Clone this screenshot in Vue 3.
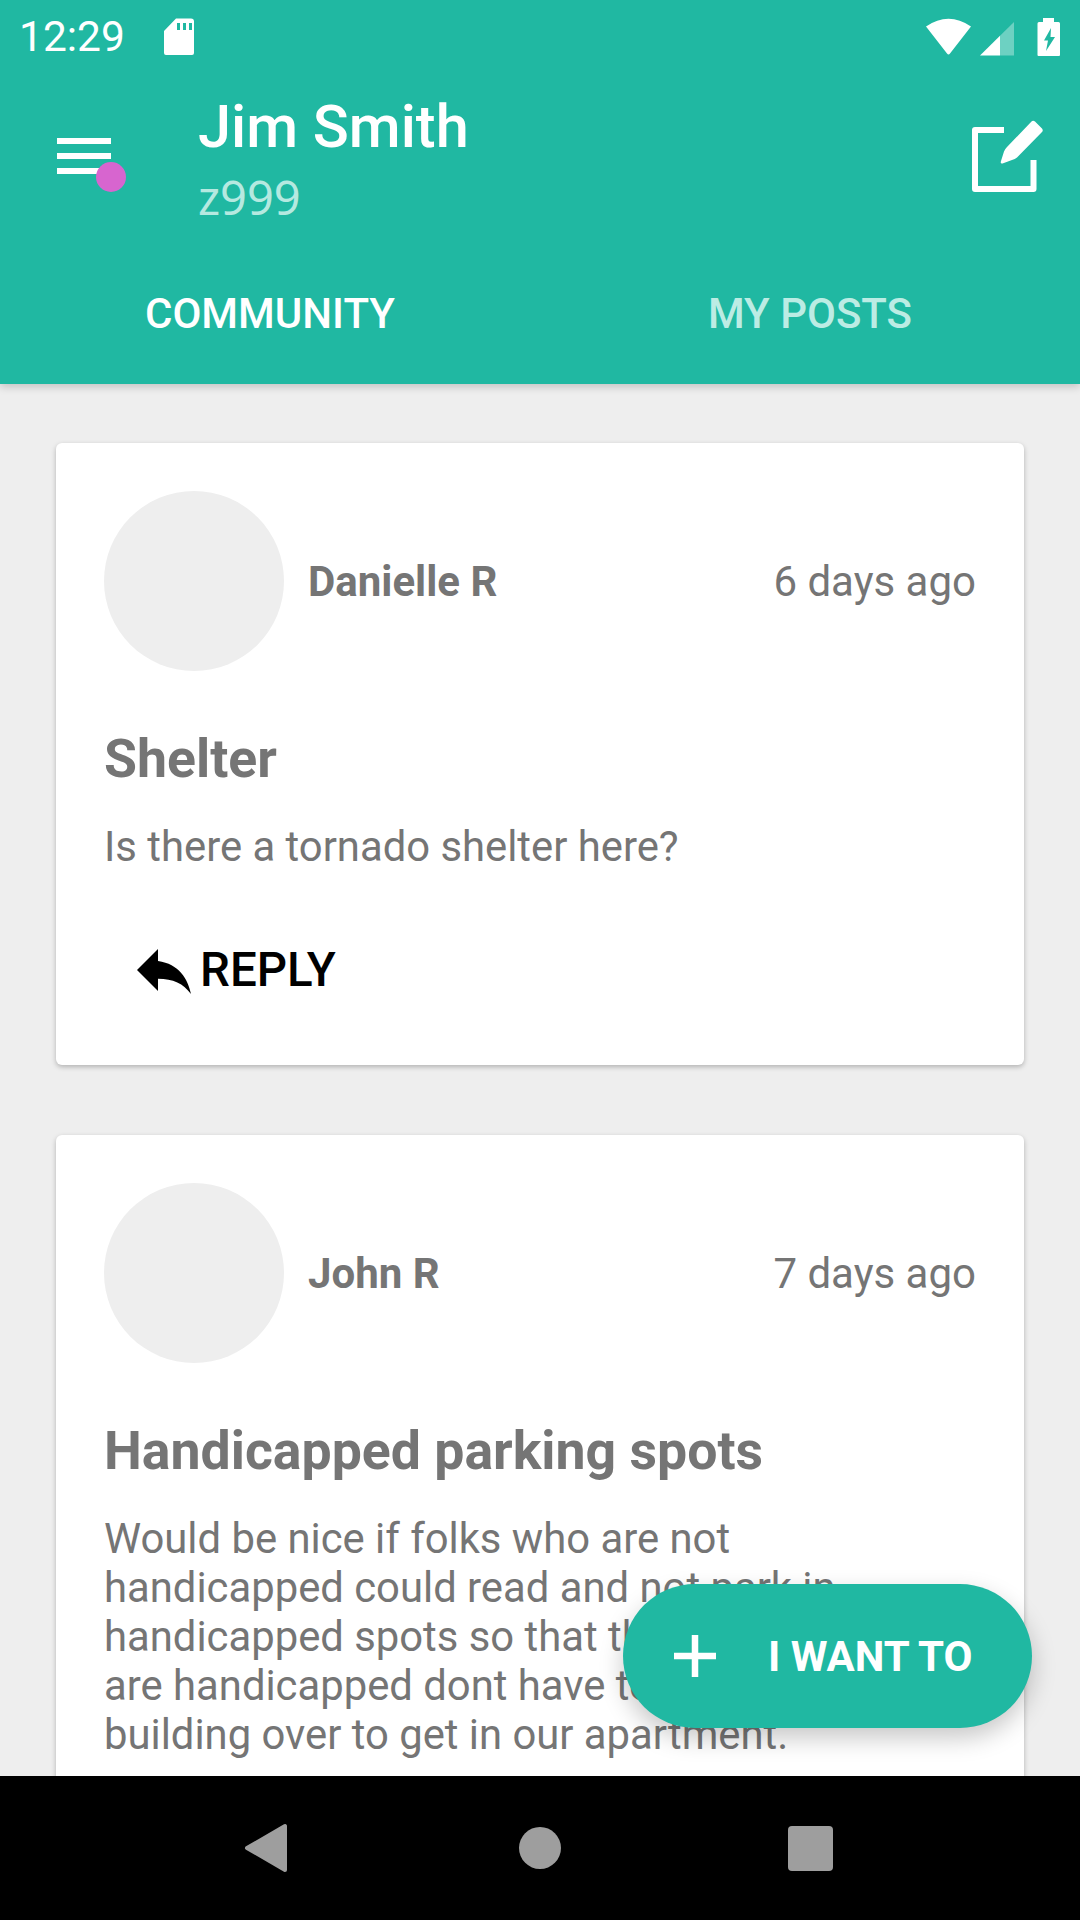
<script setup>
const posts = [
  {
    name: 'Danielle R',
    ago: '6 days ago',
    title: 'Shelter',
    lines: ['Is there a tornado shelter here?'],
    canReply: true,
  },
  {
    name: 'John R',
    ago: '7 days ago',
    title: 'Handicapped parking spots',
    lines: [
      'Would be nice if folks who are not',
      'handicapped could read and not park in',
      'handicapped spots so that those of us who',
      'are handicapped dont have to walk a whole',
      'building over to get in our apartment.',
    ],
    canReply: false,
  },
];
</script>

<template>
  <div class="phone">
    <header class="top">
      <div class="status">
        <span class="time">12:29</span>
        <svg class="sd" width="32" height="38" viewBox="0 0 32 38">
          <path fill="#fff" fill-rule="evenodd" d="M13 0.5H28a3 3 0 0 1 3 3V35a2 2 0 0 1-2 2H3a2 2 0 0 1-2-2V13ZM14 5v7h3V5ZM20 5v7h3V5ZM26 5v7h3V5Z" />
        </svg>
        <svg class="status-right" width="138" height="42" viewBox="924 14 138 42">
          <path fill="#fff" d="M926 24.500Q948.500 9 971 24.500L950 51.500Q948.500 53.500 947 51.500Z" />
          <path fill="#fff" d="M980 53.500 1000 33.800V53.500Z" />
          <path fill="#fff" opacity="0.35" d="M1000 33.800 1014 20V53.500H1000Z" />
          <path fill="#fff" fill-rule="evenodd" d="M1037.500 21.500a1.500 1.500 0 0 1 1.500-1.500H1043V16H1054V20H1058.500a1.500 1.500 0 0 1 1.500 1.500V53a1 1 0 0 1-1 1H1038.500a1 1 0 0 1-1-1ZM1051 26 1044 38.500H1048L1046 49 1055 35H1050.500Z" />
        </svg>
      </div>
      <div class="toolbar">
        <div class="menu">
          <span class="bar"></span>
          <span class="bar"></span>
          <span class="bar"></span>
          <span class="dot"></span>
        </div>
        <div class="who">
          <div class="who-name">Jim Smith</div>
          <div class="who-id">z999</div>
        </div>
        <svg class="compose" width="80" height="80" viewBox="0 0 80 80">
          <path fill="none" stroke="#fff" stroke-width="6" stroke-linejoin="round" d="M39 11H10V70H68.500V41" />
          <path fill="#fff" transform="translate(0 1)" d="M66.500 1.500Q68 0 70 1.500L77 8.500Q78.500 10.500 77 12L52 37.500Q50 39 47 40L37.500 43.500Q35 44 36 41L39 31.500Q40 29 42 27Z" />
        </svg>
      </div>
      <nav class="tabs">
        <div class="tab active">COMMUNITY</div>
        <div class="tab">MY POSTS</div>
      </nav>
    </header>

    <main class="feed">
      <article v-for="post in posts" :key="post.name" class="card">
        <div class="meta">
          <div class="avatar"></div>
          <div class="author">{{ post.name }}</div>
          <div class="ago">{{ post.ago }}</div>
        </div>
        <h2 class="title">{{ post.title }}</h2>
        <p class="body">
          <span v-for="line in post.lines" :key="line" class="line">{{ line }}</span>
        </p>
        <div v-if="post.canReply" class="reply">
          <svg width="72" height="72" viewBox="0 0 24 24">
            <path fill="#000" d="M10 9V5l-7 7 7 7v-4.100c5 0 8.500 1.600 11 5.100-1-5-4-10-11-11z" />
          </svg>
          <span>REPLY</span>
        </div>
      </article>
    </main>

    <footer class="nav">
      <svg width="46" height="52" viewBox="0 0 46 52">
        <path fill="#9e9e9e" stroke="#9e9e9e" stroke-width="4" stroke-linejoin="round" d="M3 26 41 4V48Z" />
      </svg>
      <span class="home"></span>
      <span class="recent"></span>
    </footer>

    <button class="fab">
      <svg width="44" height="44" viewBox="0 0 44 44">
        <path fill="none" stroke="#fff" stroke-width="6.500" d="M22 1V43M1 22H43" />
      </svg>
      <span>I WANT TO</span>
    </button>
  </div>
</template>

<style scoped>
.phone {
  position: relative;
  width: 1080px;
  height: 1920px;
  display: flex;
  flex-direction: column;
  overflow: hidden;
  background: #eeeeee;
  font-family: Roboto, "Liberation Sans", sans-serif;
}
.top {
  position: relative;
  z-index: 2;
  height: 384px;
  flex: none;
  background: #20b8a2;
  color: #fff;
  box-shadow: 0 3px 8px rgba(0, 0, 0, 0.18);
}
.status {
  height: 74px;
  display: flex;
  align-items: center;
  padding: 0 18px 0 19px;
}
.time {
  font-size: 42.5px;
  line-height: 74px;
}
.sd {
  margin-left: 38px;
}
.status-right {
  margin-left: auto;
}
.toolbar {
  height: 170px;
  display: flex;
  align-items: center;
  padding: 0 35px 0 57px;
}
.menu {
  position: relative;
  width: 54px;
  margin-bottom: 6px;
  display: flex;
  flex-direction: column;
  gap: 9px;
}
.bar {
  height: 6px;
  background: #fff;
}
.dot {
  position: absolute;
  right: -15px;
  bottom: -18px;
  width: 30px;
  height: 30px;
  border-radius: 50%;
  background: #d765cf;
}
.who {
  margin-left: 87px;
}
.who-name {
  font-size: 59.500px;
  font-weight: 500;
  line-height: 72px;
}
.who-id {
  margin-top: 4px;
  font-family: "Noto Sans", sans-serif;
  font-size: 47px;
  line-height: 60px;
  color: #b5e9e0;
}
.compose {
  margin-left: auto;
}
.tabs {
  display: flex;
  height: 140px;
}
.tab {
  flex: 1;
  display: flex;
  align-items: center;
  justify-content: center;
  padding-bottom: 2px;
  font-size: 42px;
  font-weight: 500;
  color: #bcece4;
}
.tab.active {
  color: #fff;
}
.feed {
  flex: 1;
  min-height: 0;
  overflow: hidden;
  padding: 59px 56px 0;
  display: flex;
  flex-direction: column;
  gap: 70px;
}
.card {
  flex: none;
  background: #fff;
  border-radius: 6px;
  box-shadow: 0 2px 5px rgba(0, 0, 0, 0.25);
  padding: 48px 48px 59px;
}
.meta {
  display: flex;
  align-items: center;
}
.avatar {
  width: 180px;
  height: 180px;
  border-radius: 50%;
  background: #eeeeee;
}
.author {
  margin-left: 24px;
  font-size: 42px;
  font-weight: 700;
  color: #757575;
}
.ago {
  margin-left: auto;
  font-size: 42px;
  color: #757575;
}
.title {
  margin: 55px 0 0;
  font-size: 53.600px;
  line-height: 66px;
  font-weight: 700;
  color: #757575;
}
.body {
  margin: 30px 0 0;
  font-size: 41.800px;
  line-height: 49px;
  color: #757575;
}
.line {
  display: block;
  white-space: nowrap;
}
.reply {
  margin: 63px 0 0 24px;
  display: flex;
  align-items: center;
  height: 72px;
  font-size: 47.500px;
  font-weight: 500;
  color: #000;
}
.nav {
  position: relative;
  z-index: 2;
  flex: none;
  height: 144px;
  background: #000;
  display: flex;
  align-items: center;
  padding-left: 244px;
}
.home {
  width: 42px;
  height: 42px;
  margin-left: 229px;
  border-radius: 50%;
  background: #9e9e9e;
}
.recent {
  width: 45px;
  height: 45px;
  margin-left: 227px;
  border-radius: 4px;
  background: #9e9e9e;
}
.fab {
  position: absolute;
  z-index: 1;
  left: 623px;
  top: 1584px;
  width: 409px;
  height: 144px;
  padding: 0 0 0 50px;
  border: 0;
  border-radius: 72px;
  background: #20b8a2;
  color: #fff;
  display: flex;
  align-items: center;
  gap: 51px;
  font-family: Roboto, "Liberation Sans", sans-serif;
  font-size: 42px;
  font-weight: 700;
  box-shadow: 0 10px 24px rgba(0, 0, 0, 0.22);
}
</style>

<style>
html,
body {
  margin: 0;
  background: #eeeeee;
}
</style>
